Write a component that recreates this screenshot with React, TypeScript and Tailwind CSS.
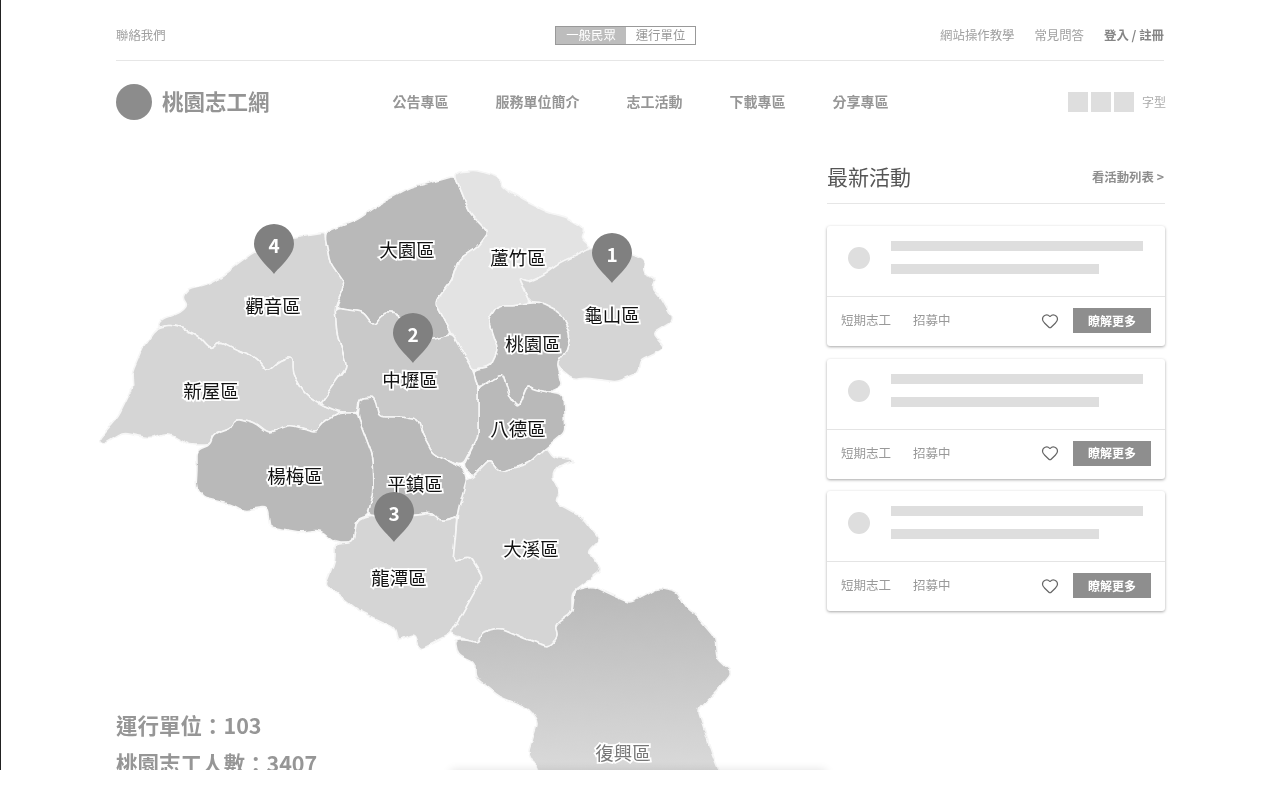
import { Heart } from "lucide-react";

const cjk = { fontFamily: '"Noto Sans CJK TC", "Noto Sans", sans-serif' };

const regions = [
  { name: "guanyin", fill: "#d5d5d5", points: "325,233 293,238 255,252 237,265 223,276 207,285 187,290 182,298 188,305 180,313 162,319 157,328 170,325 183,328 197,335 210,349 220,341 237,350 257,358 267,371 280,360 292,357 292,373 303,393 320,405 347,367 337,333 335,308 345,285 330,263 325,237" },
  { name: "xinwu", fill: "#d5d5d5", points: "157,328 170,325 183,328 197,335 210,349 220,341 237,350 257,358 267,371 280,360 292,357 292,373 303,393 320,405 340,413 323,423 317,432 290,425 268,433 253,422 235,418 232,428 213,435 210,445 190,445 168,433 150,438 123,433 103,445 98,440 118,417 133,387 132,373 143,347" },
  { name: "dayuan", fill: "#b9b9b9", points: "328,231 357,220 383,202 410,188 433,182 455,176 462,193 470,213 488,232 477,247 458,260 452,280 435,302 452,334 433,340 420,335 395,313 383,313 373,325 363,312 335,308 345,285 330,263 325,237" },
  { name: "luzhu", fill: "#e3e3e3", points: "455,176 458,172 475,170 498,177 503,188 527,202 547,212 568,218 585,228 580,237 592,248 560,263 543,275 527,282 518,277 530,303 513,305 498,305 488,320 498,350 490,366 473,370 452,334 435,302 452,280 458,260 477,247 488,232 470,213 462,193" },
  { name: "guishan", fill: "#d5d5d5", points: "592,248 632,253 645,260 643,272 657,278 652,288 660,297 673,320 652,333 665,348 640,360 638,373 617,382 585,378 573,380 558,368 557,363 567,350 570,333 560,313 540,303 530,303 518,277 527,282 543,275 560,263" },
  { name: "taoyuan", fill: "#b9b9b9", points: "513,305 530,303 540,303 560,313 570,333 567,350 557,363 563,387 550,393 533,388 527,385 518,407 510,397 502,373 478,388 473,370 490,366 498,350 488,320 498,305" },
  { name: "bade", fill: "#b9b9b9", points: "478,388 502,373 510,397 518,408 527,385 533,388 550,393 563,395 565,432 547,447 530,463 500,472 490,460 473,477 463,468 478,437" },
  { name: "zhongli", fill: "#c9c9c9", points: "335,308 363,312 373,325 383,313 395,313 420,335 433,340 452,334 473,370 478,388 478,437 463,465 450,463 433,453 422,433 418,420 400,417 380,417 375,397 360,398 357,413 340,413 320,405 347,367 337,333" },
  { name: "pingzhen", fill: "#b9b9b9", points: "360,398 375,397 380,417 400,417 418,420 422,433 433,453 450,463 463,468 467,480 457,517 450,520 440,522 432,513 417,515 392,518 368,515 374,490 373,457 358,417" },
  { name: "yangmei", fill: "#b9b9b9", points: "197,450 210,445 213,435 232,428 235,418 253,422 268,433 290,425 317,432 323,423 340,413 357,413 358,417 373,457 374,490 368,515 357,518 353,542 335,542 320,530 300,532 270,527 267,507 243,510 230,503 203,497 196,487 197,470" },
  { name: "longtan", fill: "#d5d5d5", points: "335,543 353,542 357,520 368,515 392,518 417,515 432,513 440,522 450,520 457,517 453,562 470,556 483,577 463,613 450,635 420,650 415,635 400,640 397,640 395,628 357,610 325,585 335,560" },
  { name: "daxi", fill: "#d5d5d5", points: "467,478 473,477 490,460 500,472 530,463 547,447 553,457 575,460 557,466 552,477 560,492 555,502 582,517 600,540 588,552 602,570 580,587 572,593 572,612 555,625 558,638 550,647 528,640 500,628 482,632 478,643 467,640 450,635 463,613 483,577 470,556 453,562 458,510" },
  { name: "fuxing", fill: "url(#fuxing)", points: "455,640 458,655 475,663 475,677 500,697 528,708 538,722 528,753 545,785 725,785 712,753 698,710 720,687 732,672 717,658 715,637 698,617 685,607 677,592 657,588 645,595 630,603 607,593 592,586 575,590 572,612 555,625 558,638 550,647 528,640 500,628 482,632 478,643 467,640" },
];

const labels = [
  { text: "大園區", x: 407, y: 249 },
  { text: "蘆竹區", x: 518, y: 257 },
  { text: "觀音區", x: 273, y: 305 },
  { text: "龜山區", x: 612, y: 314 },
  { text: "桃園區", x: 533, y: 343 },
  { text: "中壢區", x: 410, y: 379 },
  { text: "新屋區", x: 211, y: 390 },
  { text: "八德區", x: 518, y: 428 },
  { text: "楊梅區", x: 295, y: 475 },
  { text: "平鎮區", x: 415, y: 483 },
  { text: "大溪區", x: 531, y: 548 },
  { text: "龍潭區", x: 399, y: 577 },
  { text: "復興區", x: 623, y: 752 },
];

const pins = [
  { n: 1, x: 612, y: 233 },
  { n: 2, x: 413, y: 313 },
  { n: 3, x: 394, y: 492 },
  { n: 4, x: 274, y: 224 },
];

// rounds every corner a little so the district outlines read as organic borders
function smoothPath(points: string) {
  const pts = points.split(" ").map((p) => p.split(",").map(Number));
  const toward = (a: number[], b: number[]) => {
    const len = Math.hypot(b[0] - a[0], b[1] - a[1]) || 1;
    const r = Math.min(5, len / 2);
    return [a[0] + ((b[0] - a[0]) * r) / len, a[1] + ((b[1] - a[1]) * r) / len];
  };
  let d = "";
  pts.forEach((p, i) => {
    const prev = pts[(i - 1 + pts.length) % pts.length];
    const next = pts[(i + 1) % pts.length];
    const a = toward(p, prev);
    const b = toward(p, next);
    d += `${i === 0 ? "M" : "L"}${a[0]} ${a[1]}Q${p[0]} ${p[1]} ${b[0]} ${b[1]}`;
  });
  return d + "Z";
}

function TaoyuanMap() {
  return (
    <svg viewBox="90 160 650 610" className="block h-[610px] w-[650px] -ml-[26px]" style={cjk}>
      <defs>
        <linearGradient id="fuxing" x1="0" y1="0" x2="0" y2="1">
          <stop offset="0" stopColor="#b9b9b9" />
          <stop offset="1" stopColor="#dcdcdc" />
        </linearGradient>
        <filter id="rough" x="0" y="0" width="100%" height="100%" colorInterpolationFilters="sRGB">
          <feTurbulence type="fractalNoise" baseFrequency="0.07" numOctaves="2" seed="4" />
          <feDisplacementMap in="SourceGraphic" scale="6" xChannelSelector="R" yChannelSelector="G" />
        </filter>
      </defs>
      <g filter="url(#rough)">
        {regions.map((r) => (
          <path key={r.name} d={smoothPath(r.points)} fill={r.fill} stroke="#f6f6f6" strokeWidth={1.6} strokeLinejoin="round" />
        ))}
      </g>
      {labels.map((l) => (
        <text
          key={l.text}
          x={l.x}
          y={l.y}
          textAnchor="middle"
          dominantBaseline="central"
          className={`text-[18.5px] stroke-white stroke-[3.5px] [paint-order:stroke] ${l.text === "復興區" ? "fill-[#777]" : "fill-[#111]"}`}
        >
          {l.text}
        </text>
      ))}
      {pins.map((p) => (
        <g key={p.n} transform={`translate(${p.x} ${p.y})`}>
          <path d="M0 50C-4 44-20 32-20 20A20 20 0 0 1 20 20C20 32 4 44 0 50Z" fill="#808080" />
          <text y={20} textAnchor="middle" dominantBaseline="central" className="fill-white text-[19px] font-bold">
            {p.n}
          </text>
        </g>
      ))}
    </svg>
  );
}

function ActivityCard() {
  return (
    <div className="h-[120px] rounded-[3px] bg-white shadow-[0_1px_3px_rgba(0,0,0,0.35)]">
      <div className="flex h-[71px] gap-[21px] border-b border-[#e4e4e4] pl-[21px] pr-[22px] pt-[15px]">
        <div className="mt-[6px] h-[22px] w-[22px] rounded-full bg-[#dedede]" />
        <div className="flex-1">
          <div className="h-[10px] bg-[#dedede]" />
          <div className="mt-[13px] h-[10px] w-[208px] bg-[#dedede]" />
        </div>
      </div>
      <div className="flex h-[49px] items-center pb-[2px] pl-[14px] pr-[14px] text-[12.5px] text-[#999]">
        <span>短期志工</span>
        <span className="ml-[22px]">招募中</span>
        <Heart className="ml-auto text-[#666]" size={18} strokeWidth={1.6} />
        <button className="ml-[14px] h-[25px] w-[78px] bg-[#8e8e8e] text-[12px] font-bold text-white">瞭解更多</button>
      </div>
    </div>
  );
}

export default function App() {
  return (
    <div className="relative h-[770px] overflow-hidden border-l border-[#222] bg-white blur-[0.4px]" style={cjk}>
      <div className="ml-[115px] w-[1048px]">
        <div className="flex h-[61px] items-center border-b border-[#e6e6e6] pt-[10px] text-[12.4px] text-[#a0a0a0]">
          <span className="w-[439px]">聯絡我們</span>
          <div className="flex h-[19px] w-[141px] border border-[#999] text-[12.4px]">
            <span className="flex w-[70px] items-center justify-center bg-[#bdbdbd] text-white">一般民眾</span>
            <span className="flex flex-1 items-center justify-center text-[#999]">運行單位</span>
          </div>
          <span className="ml-auto">網站操作教學</span>
          <span className="ml-[20px]">常見問答</span>
          <span className="ml-[20px] font-bold text-[#858585]">登入 / 註冊</span>
        </div>
        <div className="flex h-[99px] items-center pb-[18px]">
          <div className="h-[36px] w-[36px] rounded-full bg-[#8c8c8c]" />
          <span className="ml-[10px] text-[21.5px] font-bold text-[#949494]">桃園志工網</span>
          <nav className="ml-[123px] flex gap-[47px] text-[14px] font-bold text-[#969696]">
            <span>公告專區</span>
            <span>服務單位簡介</span>
            <span>志工活動</span>
            <span>下載專區</span>
            <span>分享專區</span>
          </nav>
          <div className="ml-auto -mr-[2px] flex items-center gap-[3px]">
            <div className="h-[20px] w-[20px] bg-[#dedede]" />
            <div className="h-[20px] w-[20px] bg-[#dedede]" />
            <div className="h-[20px] w-[20px] bg-[#dedede]" />
            <span className="ml-[5px] text-[12px] text-[#aaa]">字型</span>
          </div>
        </div>
        <div className="flex">
          <div className="relative w-[711px] shrink-0">
            <TaoyuanMap />
            <div className="absolute left-0 top-[546px] text-[21.5px] font-bold leading-[38px] text-[#969696]">
              <div>運行單位：103</div>
              <div>桃園志工人數：3407</div>
            </div>
          </div>
          <div className="w-[338px] shrink-0">
            <div className="flex h-[44px] items-center justify-between border-b border-[#e6e6e6] pb-[9px]">
              <h2 className="text-[21px] text-[#555]">最新活動</h2>
              <span className="mr-[1px] text-[12.4px] font-bold text-[#8e8e8e]">看活動列表 &gt;</span>
            </div>
            <div className="mt-[22px] flex flex-col gap-[12.6px]">
              <ActivityCard />
              <ActivityCard />
              <ActivityCard />
            </div>
          </div>
        </div>
      </div>
      <div className="absolute left-[450px] top-[770px] h-[16px] w-[375px] shadow-[0_0_10px_rgba(0,0,0,0.12)]" />
    </div>
  );
}
